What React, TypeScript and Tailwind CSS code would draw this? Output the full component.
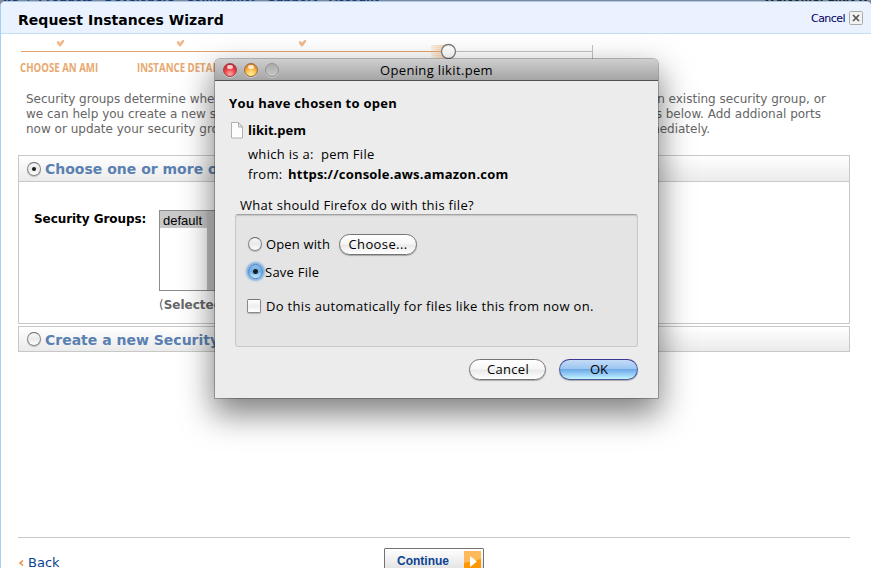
import React from 'react';

const verdana = "font-['DejaVu_Sans',Verdana,sans-serif]";
const lucida = "font-['Open_Sans','Noto_Sans',sans-serif]";

function Check({ x }: { x: number }) {
  return (
    <path
      d={`M${x} 2v2.5l2.5 3h1L${x + 7} 3V1h-1.5L${x + 3} 3.5 ${x + 1} 2z`}
      fill="#f0b98c"
    />
  );
}

function Progress() {
  return (
    <svg width="575" height="20" viewBox="0 0 575 20" className="block">
      <defs>
        <linearGradient id="trail" gradientUnits="userSpaceOnUse" x1="407" y1="0" x2="424" y2="0">
          <stop offset="0" stopColor="#f3a95e" stopOpacity=".08" />
          <stop offset="1" stopColor="#f0a45c" stopOpacity=".5" />
        </linearGradient>
      </defs>
      <Check x={36} />
      <Check x={156} />
      <Check x={278} />
      <path d="M0 12.5h427" stroke="#e5a36b" />
      <path d="M427 12.5h144" stroke="#c3c3c3" />
      <path d="M571.5 6v14" stroke="#c3c3c3" />
      <path
        d="M412 6.5h14M409 8.5h16M414 10.5h10M408 14.5h16M411 16.5h14M415 18.5h11"
        stroke="url(#trail)"
        strokeOpacity=".6"
      />
      <rect x="410" y="6" width="15" height="13" fill="url(#trail)" opacity=".75" />
      <circle cx="427.5" cy="12.5" r="7" fill="#fff" stroke="#7d7d7d" strokeWidth="1.3" />
    </svg>
  );
}

function Radio({ on = false, blue = false }: { on?: boolean; blue?: boolean }) {
  return (
    <span
      className={
        blue
          ? 'flex size-[15px] shrink-0 items-center justify-center rounded-full border border-[#4a7fbb] bg-linear-to-b from-[#8dbdf0] via-[#6aaeea] to-[#c4ecff] shadow-[0_0_2px_2px_#7fb0e2]'
          : 'flex size-[14px] shrink-0 items-center justify-center rounded-full border border-[#868686] border-t-[#666] bg-linear-to-b from-[#f8f8f8] via-[#e9e9e9] to-white shadow-[0_1px_1px_#0003]'
      }
    >
      {on && <span className={`rounded-full bg-[#1c1c1c] ${blue ? 'size-[5px]' : 'size-[4px]'}`} />}
    </span>
  );
}

function Light({ tone }: { tone: 'red' | 'amber' | 'off' }) {
  const tones = {
    red: 'border-[#9c4446] bg-[radial-gradient(circle_at_50%_85%,#ffaaa6_0,#f0454a_45%,#d0282f_75%,#9d2328_100%)]',
    amber: 'border-[#9f6d38] bg-[radial-gradient(circle_at_50%_85%,#fff39c_0,#f9bc4c_45%,#e08c2a_75%,#a7691d_100%)]',
    off: 'border-[#929292] bg-linear-to-b from-[#acacac] to-[#c8c8c8]',
  };
  return (
    <span className={`flex size-[14px] justify-center rounded-full border shadow-[0_1px_0_#ffffff66] ${tones[tone]}`}>
      <span className={tone === 'off' ? 'hidden' : 'mt-px h-[4px] w-[6px] rounded-full bg-white/75'} />
    </span>
  );
}

function Pill({ children, className }: { children: React.ReactNode; className: string }) {
  return (
    <button
      className={`flex h-[21px] items-center justify-center rounded-full border text-[13px] leading-[19px] text-black shadow-[0_1px_1px_#0004] ${className}`}
    >
      {children}
    </button>
  );
}

const plain = 'border-[#747474] bg-[linear-gradient(#fff_0,#f6f6f6_48%,#e9e9e9_52%,#fff_100%)]';
const aqua = 'border-[#4a5a9c] border-t-[#3b3593] bg-[linear-gradient(#c3dcf6_0,#9cc6f1_46%,#6cabe8_50%,#a0d4f8_80%,#c4f6ff_100%)]';

function Dialog() {
  return (
    <div
      className={`absolute left-[215px] top-[59px] h-[339px] w-[443px] rounded-t-[5px] bg-[#ececec] text-[13px] text-black shadow-[0_0_0_1px_#00000040,0_14px_32px_2px_#00000080] ${lucida}`}
    >
      <div className="relative flex h-[22px] items-center gap-[7px] rounded-t-[5px] border-b border-[#515151] bg-linear-to-b from-[#cfcfcf] to-[#a5a5a5] pl-[8px]">
        <Light tone="red" />
        <Light tone="amber" />
        <Light tone="off" />
        <span className="absolute inset-x-0 top-[1px] text-center leading-5 tracking-[0.35px] whitespace-nowrap">
          Opening likit.pem
        </span>
      </div>
      <div className="flex flex-col pl-[14px] tracking-[0.3px] whitespace-nowrap">
        <div className="mt-[13px] h-[18px] leading-[18px] font-bold tracking-[0.27px]">You have chosen to open</div>
        <div className="mt-[9px] flex h-[18px] items-center leading-[18px] font-bold tracking-[0]">
          <svg width="13" height="17" viewBox="0 0 13 17" className="mr-[4px] ml-[2px]">
            <path d="M.5.5h7l4 4.5v11H.5z" fill="#fdfdfd" stroke="#b0b0b0" />
            <path d="M7.5.5V5h4z" fill="#e8e8e8" stroke="#b0b0b0" />
          </svg>
          likit.pem
        </div>
        <div className="mt-[5px] flex h-5 pl-[19px] leading-5">
          <span className="w-[73px]">which is a:</span>
          <span>pem File</span>
        </div>
        <div className="flex h-5 pl-[19px] leading-5">
          <span className="w-[40px]">from:</span>
          <span className="font-bold tracking-[0.22px]">https://console.aws.amazon.com</span>
        </div>
        <div className="mt-[11px] h-[19px] pl-[11px] leading-[20px]">What should Firefox do with this file?</div>
      </div>
      <div className="ml-[20px] flex h-[133px] w-[403px] flex-col rounded-[3px] border border-[#c8c8c8] border-t-[#a2a2a2] bg-[#e4e4e4] pl-[12px] whitespace-nowrap shadow-[inset_0_1px_1px_#0002]">
        <div className="mt-[18px] flex h-[22px] items-center">
          <Radio />
          <span className="mt-[2px] ml-[4px] w-[73px] tracking-[0.15px]">Open with</span>
          <Pill className={`w-[78px] tracking-[0.4px] ${plain}`}>Choose...</Pill>
        </div>
        <div className="mt-[5px] flex h-[22px] items-center">
          <Radio on blue />
          <span className="mt-[3px] ml-[2px] tracking-[0.25px]">Save File</span>
        </div>
        <div className="mt-[13px] flex h-[22px] items-center">
          <span className="-ml-px size-[14px] rounded-[2px] border border-[#8a8a8a] border-t-[#777] bg-linear-to-b from-white via-[#eee] to-white shadow-[0_1px_1px_#0003]" />
          <span className="mt-[2px] ml-[5px] tracking-[0.32px]">Do this automatically for files like this from now on.</span>
        </div>
      </div>
      <div className="mt-[12px] flex justify-end gap-[13px] pr-[20px]">
        <Pill className={`w-[77px] pl-px tracking-[0.3px] ${plain}`}>Cancel</Pill>
        <Pill className={`w-[79px] pl-px ${aqua}`}>OK</Pill>
      </div>
    </div>
  );
}

export default function App() {
  return (
    <div className={`relative h-[568px] w-[871px] overflow-hidden bg-[#7f8a9b] whitespace-nowrap ${verdana}`}>
      <div className="flex h-px justify-between overflow-hidden pr-1 pl-[2px] text-[11px] font-bold text-[#1b376b]">
        <span className="-mt-[9px] leading-[14px]">ws &nbsp;|&nbsp; Products &nbsp; Developers &nbsp; Community &nbsp; Support &nbsp; Account</span>
        <span className="-mt-[9px] leading-[14px] text-[#222]">Welcome, Likit K</span>
      </div>
      <div className="flex h-[567px] flex-col rounded-t-[5px] border-t border-l border-t-[#a9cbe9] border-l-[#a5cff1] bg-white">
        <header className="flex h-[32px] shrink-0 items-center justify-between rounded-t-[4px] border-b border-[#c3dff5] bg-[#eaf2ff] pr-[8px] pl-[17px]">
          <h1 className="mt-[5px] text-[14px] font-bold tracking-[0.03px] text-black">Request Instances Wizard</h1>
          <div className="mt-px flex items-center gap-[4px] text-[11px] tracking-[-0.55px] text-[#00005f]">
            <span className="mt-[3px]">Cancel</span>
            <svg width="14" height="14" viewBox="0 0 14 14">
              <rect x=".5" y=".5" width="13" height="13" rx="1" fill="#f2f2f2" stroke="#aaa" />
              <path d="M4 4l6 6M10 4l-6 6" stroke="#555" strokeWidth="1.7" />
            </svg>
          </div>
        </header>
        <div className="mt-[5px] pl-[20px]">
          <Progress />
          <div className="mt-[2px] -ml-px flex h-[14px] font-['Open_Sans',sans-serif] text-[11.5px] leading-[14px] font-bold text-[#e8a970]">
            <span className="w-[117px] origin-left scale-x-[0.84]">CHOOSE AN AMI</span>
            <span className="origin-left scale-x-[0.84]">INSTANCE DETAILS</span>
          </div>
        </div>
        <div className="mt-[17px] h-[45px] pl-[25px] text-[12px] leading-[15px] text-[#666]">
          <div className="flex w-[800px] justify-between">
            <span>Security groups determine whether</span>
            <span>an existing security group, or</span>
          </div>
          <div className="flex w-[795px] justify-between">
            <span>we can help you create a new security</span>
            <span>ports below. Add addional ports</span>
          </div>
          <div className="flex w-[684px] justify-between">
            <span>now or update your security group</span>
            <span>immediately.</span>
          </div>
        </div>
        <section className="mt-[18px] ml-[17px] h-[169px] w-[832px] shrink-0 border border-[#c8c8c8]">
          <div className="flex h-[26px] items-center border-b border-[#c8c8c8] bg-linear-to-b from-white to-[#ebebeb] pl-[8px] text-[14px] font-bold text-[#5a80b1]">
            <Radio on />
            <span className="mt-[2px] ml-[4px]">Choose one or more of your existing Security Groups</span>
          </div>
          <div className="mt-[28px] flex pl-[15px]">
            <span className="mt-[1px] w-[125px] text-[12px] leading-[16px] font-bold tracking-[-0.06px] text-black">Security Groups:</span>
            <div>
              <div className="flex h-[81px] w-[63px] border border-[#8d8d8d]">
                <div className="w-[47px]">
                  <div className="h-[17px] bg-[#c9c9c9] pl-[3px] font-['Liberation_Sans',Arial,sans-serif] text-[13px] leading-[19px] text-black">
                    default
                  </div>
                </div>
                <div className="flex-1 bg-linear-to-r from-[#bdbdbd] to-[#d8d8d8]" />
              </div>
              <div className="mt-[6px] text-[12px] leading-[16px] text-[#666]">
                (<b>Selected groups:</b> default)
              </div>
            </div>
          </div>
        </section>
        <section className="mt-[2px] ml-[17px] flex h-[26px] w-[832px] shrink-0 items-center border border-[#c8c8c8] bg-linear-to-b from-white to-[#ebebeb] pl-[8px] text-[14px] font-bold text-[#5a80b1]">
          <Radio />
          <span className="mt-[2px] ml-[4px]">Create a new Security Group</span>
        </section>
        <footer className="mt-[185px] ml-[17px] flex h-[31px] w-[832px] shrink-0 items-start overflow-hidden border-t border-[#c8c8c8]">
          <span className="mt-[16px] flex w-[366px] items-center text-[13px] leading-[18px] text-[#0a4393]">
            <svg width="6" height="8" viewBox="0 0 6 8" className="mr-[4px]">
              <path d="M5 1.5L2 4l3 2.5" fill="none" stroke="#eb8a35" strokeWidth="1.5" />
            </svg>
            Back
          </span>
          <button className="mt-[10px] flex h-[26px] w-[100px] justify-between rounded-[1px] border border-[#737373] bg-linear-to-b from-white to-[#dedede] pr-[2px] pl-[12px] font-['Liberation_Sans',Arial,sans-serif] text-[12px] font-bold text-[#0a4393]">
            <span className="mt-[3px]">Continue</span>
            <svg width="17" height="21" viewBox="0 0 17 21" className="mt-[2px]">
              <path d="M0 0h17v21H0z" fill="#ff9700" />
              <path d="M0 0h17v8L0 12z" fill="#ffb95b" />
              <path d="M6 5l7 5.5L6 16z" fill="#fff" />
            </svg>
          </button>
        </footer>
      </div>
      <Dialog />
    </div>
  );
}
